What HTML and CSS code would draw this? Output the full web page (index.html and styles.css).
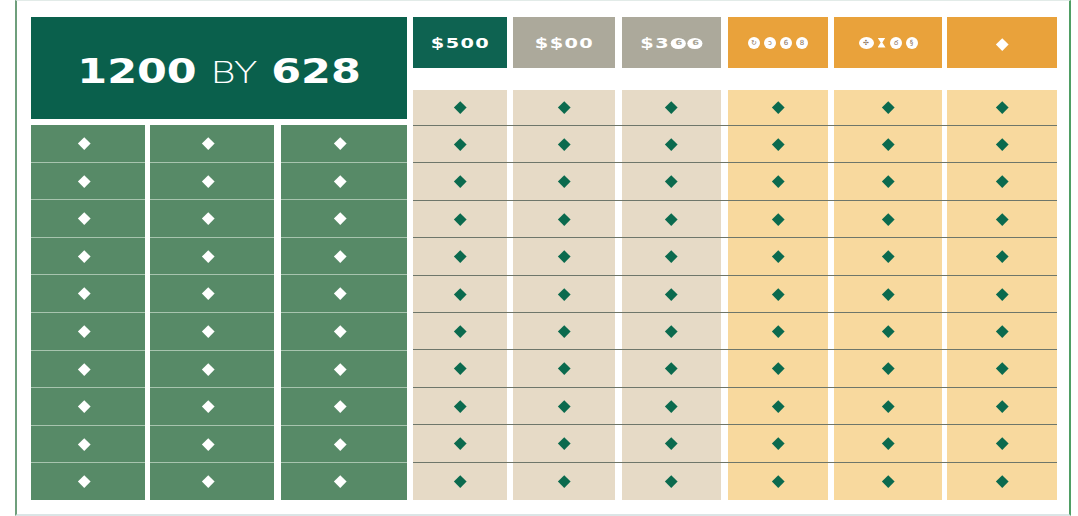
FILE: index.html
```html
<!DOCTYPE html>
<html lang="en">
<head>
<meta charset="utf-8">
<title>1200 by 628</title>
<link rel="stylesheet" href="styles.css">
</head>
<body>
<div class="frame">
  <div class="board">
    <div class="left">
      <div class="title"><span class="title-text"><b>1200</b> <span class="thin">BY</span> <b>628</b></span></div>
      <div class="green-grid">
        <div class="gcol g1">
          <div class="gcell"><i class="dia white"></i></div><div class="gcell"><i class="dia white"></i></div><div class="gcell"><i class="dia white"></i></div><div class="gcell"><i class="dia white"></i></div><div class="gcell"><i class="dia white"></i></div><div class="gcell"><i class="dia white"></i></div><div class="gcell"><i class="dia white"></i></div><div class="gcell"><i class="dia white"></i></div><div class="gcell"><i class="dia white"></i></div><div class="gcell"><i class="dia white"></i></div>
        </div>
        <div class="gcol g2">
          <div class="gcell"><i class="dia white"></i></div><div class="gcell"><i class="dia white"></i></div><div class="gcell"><i class="dia white"></i></div><div class="gcell"><i class="dia white"></i></div><div class="gcell"><i class="dia white"></i></div><div class="gcell"><i class="dia white"></i></div><div class="gcell"><i class="dia white"></i></div><div class="gcell"><i class="dia white"></i></div><div class="gcell"><i class="dia white"></i></div><div class="gcell"><i class="dia white"></i></div>
        </div>
        <div class="gcol g3">
          <div class="gcell"><i class="dia white"></i></div><div class="gcell"><i class="dia white"></i></div><div class="gcell"><i class="dia white"></i></div><div class="gcell"><i class="dia white"></i></div><div class="gcell"><i class="dia white"></i></div><div class="gcell"><i class="dia white"></i></div><div class="gcell"><i class="dia white"></i></div><div class="gcell"><i class="dia white"></i></div><div class="gcell"><i class="dia white"></i></div><div class="gcell"><i class="dia white"></i></div>
        </div>
      </div>
    </div>
    <div class="right">
      <div class="heads">
        <div class="head k1 dark"><span class="price">$500</span></div>
        <div class="head k2 grey"><span class="price">$$00</span></div>
        <div class="head k3 grey"><span class="price">$3<span class="dot">6</span><span class="dot">6</span></span></div>
        <div class="head k4 orange"><span class="blobs"><span class="blob">↻</span><span class="blob">ↄ</span><span class="blob">6</span><span class="blob">8</span></span></div>
        <div class="head k5 orange"><span class="blobs"><span class="blob oval">✣</span><span class="hour"></span><span class="blob">ర</span><span class="blob">§</span></span></div>
        <div class="head k6 orange"><i class="dia white"></i></div>
      </div>
      <div class="body">
        <div class="row"><div class="cell k1 beige"><i class="dia"></i></div><div class="cell k2 beige"><i class="dia"></i></div><div class="cell k3 beige"><i class="dia"></i></div><div class="cell k4 sand"><i class="dia"></i></div><div class="cell k5 sand"><i class="dia"></i></div><div class="cell k6 sand"><i class="dia"></i></div></div>
        <div class="row"><div class="cell k1 beige"><i class="dia"></i></div><div class="cell k2 beige"><i class="dia"></i></div><div class="cell k3 beige"><i class="dia"></i></div><div class="cell k4 sand"><i class="dia"></i></div><div class="cell k5 sand"><i class="dia"></i></div><div class="cell k6 sand"><i class="dia"></i></div></div>
        <div class="row"><div class="cell k1 beige"><i class="dia"></i></div><div class="cell k2 beige"><i class="dia"></i></div><div class="cell k3 beige"><i class="dia"></i></div><div class="cell k4 sand"><i class="dia"></i></div><div class="cell k5 sand"><i class="dia"></i></div><div class="cell k6 sand"><i class="dia"></i></div></div>
        <div class="row"><div class="cell k1 beige"><i class="dia"></i></div><div class="cell k2 beige"><i class="dia"></i></div><div class="cell k3 beige"><i class="dia"></i></div><div class="cell k4 sand"><i class="dia"></i></div><div class="cell k5 sand"><i class="dia"></i></div><div class="cell k6 sand"><i class="dia"></i></div></div>
        <div class="row"><div class="cell k1 beige"><i class="dia"></i></div><div class="cell k2 beige"><i class="dia"></i></div><div class="cell k3 beige"><i class="dia"></i></div><div class="cell k4 sand"><i class="dia"></i></div><div class="cell k5 sand"><i class="dia"></i></div><div class="cell k6 sand"><i class="dia"></i></div></div>
        <div class="row"><div class="cell k1 beige"><i class="dia"></i></div><div class="cell k2 beige"><i class="dia"></i></div><div class="cell k3 beige"><i class="dia"></i></div><div class="cell k4 sand"><i class="dia"></i></div><div class="cell k5 sand"><i class="dia"></i></div><div class="cell k6 sand"><i class="dia"></i></div></div>
        <div class="row"><div class="cell k1 beige"><i class="dia"></i></div><div class="cell k2 beige"><i class="dia"></i></div><div class="cell k3 beige"><i class="dia"></i></div><div class="cell k4 sand"><i class="dia"></i></div><div class="cell k5 sand"><i class="dia"></i></div><div class="cell k6 sand"><i class="dia"></i></div></div>
        <div class="row"><div class="cell k1 beige"><i class="dia"></i></div><div class="cell k2 beige"><i class="dia"></i></div><div class="cell k3 beige"><i class="dia"></i></div><div class="cell k4 sand"><i class="dia"></i></div><div class="cell k5 sand"><i class="dia"></i></div><div class="cell k6 sand"><i class="dia"></i></div></div>
        <div class="row"><div class="cell k1 beige"><i class="dia"></i></div><div class="cell k2 beige"><i class="dia"></i></div><div class="cell k3 beige"><i class="dia"></i></div><div class="cell k4 sand"><i class="dia"></i></div><div class="cell k5 sand"><i class="dia"></i></div><div class="cell k6 sand"><i class="dia"></i></div></div>
        <div class="row"><div class="cell k1 beige"><i class="dia"></i></div><div class="cell k2 beige"><i class="dia"></i></div><div class="cell k3 beige"><i class="dia"></i></div><div class="cell k4 sand"><i class="dia"></i></div><div class="cell k5 sand"><i class="dia"></i></div><div class="cell k6 sand"><i class="dia"></i></div></div>
        <div class="row"><div class="cell k1 beige"><i class="dia"></i></div><div class="cell k2 beige"><i class="dia"></i></div><div class="cell k3 beige"><i class="dia"></i></div><div class="cell k4 sand"><i class="dia"></i></div><div class="cell k5 sand"><i class="dia"></i></div><div class="cell k6 sand"><i class="dia"></i></div></div>
      </div>
    </div>
  </div>
</div>
</body>
</html>
```

FILE: styles.css
```css
* { box-sizing: border-box; }
html, body { margin: 0; padding: 0; background: #ffffff; }
body { font-family: "DejaVu Sans", "Liberation Sans", sans-serif; }

.frame {
  margin-left: 15px;
  width: 1056px;
  height: 516px;
  border-left: 2px solid #6f9f7c;
  border-right: 2px solid #4f9e64;
  border-top: 1px solid #e2ebe8;
  border-bottom: 2px solid #dbe5e6;
  padding: 16px 0 0 14px;
}

.board { display: flex; gap: 6px; }

/* left side */
.left { width: 376px; display: flex; flex-direction: column; gap: 6px; }
.title {
  height: 102px;
  background: #0a604c;
  color: #fff;
  display: flex;
  align-items: center;
  justify-content: center;
  padding-top: 6px;
}
.title-text {
  display: inline-block;
  font-size: 33px;
  line-height: 1;
  transform: scaleX(1.3);
  white-space: nowrap;
}
.title-text b { font-weight: 700; }
.title-text .thin { font-weight: 300; font-size: 30px; }

.green-grid { display: flex; height: 375px; }
.gcol {
  display: grid;
  grid-template-rows: repeat(10, 1fr);
  row-gap: 1px;
  background: #a7c4ae;
}
.g1 { width: 114px; }
.g2 { width: 124px; margin-left: 5px; }
.g3 { width: 126px; margin-left: 7px; }
.gcell {
  background: #578a67;
  display: flex;
  align-items: center;
  justify-content: center;
  padding-right: 7px;
}

.dia {
  display: block;
  width: 8.5px;
  height: 8.5px;
  background: #0b6a4e;
  transform: rotate(45deg);
}
.dia.white { background: #ffffff; }

/* right side */
.right { width: 644px; display: flex; flex-direction: column; gap: 22px; }
.heads { display: flex; height: 51px; }
.k1 { width: 94px; }
.k2 { width: 102px; margin-left: 6px; }
.k3 { width: 99px; margin-left: 7px; }
.k4 { width: 100px; margin-left: 7px; }
.k5 { width: 108px; margin-left: 6px; }
.k6 { width: 110px; margin-left: 5px; }

.head {
  display: flex;
  align-items: center;
  justify-content: center;
  color: #fff;
}
.head.dark { background: #0e6351; }
.head.grey { background: #aca99b; }
.head.orange { background: #e9a23b; }
.head.k6 { padding-top: 3px; }

.price {
  display: inline-block;
  font-weight: 700;
  font-size: 14px;
  letter-spacing: 1px;
  transform: scaleX(1.38);
  white-space: nowrap;
}
.price .dot {
  display: inline-block;
  width: 11px;
  height: 11px;
  border-radius: 50%;
  background: #fff;
  color: #a8a596;
  font-size: 7px;
  line-height: 11px;
  text-align: center;
  letter-spacing: 0;
  vertical-align: middle;
  margin-left: 1px;
}

.blobs { display: flex; align-items: center; gap: 4px; }
.blob {
  width: 12px;
  height: 12px;
  border-radius: 50%;
  background: #fff;
  color: #8a7055;
  font-size: 7px;
  line-height: 12px;
  text-align: center;
}
.blob.oval { width: 15px; }
.hour {
  width: 8px;
  height: 10px;
  background: #fff;
  clip-path: polygon(0 0, 100% 0, 60% 50%, 100% 100%, 0 100%, 40% 50%);
}

.body {
  height: 410px;
  display: grid;
  grid-template-rows: 36px repeat(10, 1fr);
}
.row {
  display: flex;
  border-bottom: 1px solid #6e766a;
}
.row:last-child { border-bottom: none; }
.cell {
  display: flex;
  align-items: center;
  justify-content: center;
}
.cell.beige { background: #e6dac6; }
.cell.sand { background: #f8d99e; }
```
